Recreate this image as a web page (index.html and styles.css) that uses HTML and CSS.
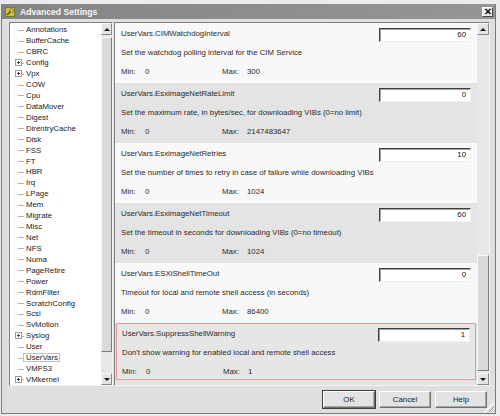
FILE: index.html
```html
<!DOCTYPE html>
<html lang="en">
<head>
    <meta charset="utf-8">
    <title>Advanced Settings</title>
    <link rel="stylesheet" href="styles.css">
</head>
<body>
<div class="window">
    <div class="titlebar">
        <svg class="app" viewBox="0 0 10 10" width="10" height="10">
            <rect x="0.5" y="0.5" width="9" height="9" fill="#c9c33a" stroke="#7c7a22"/>
            <path d="M2 8 L6 4" stroke="#6b4a12" stroke-width="1.6"/>
            <circle cx="6.6" cy="3.4" r="1.6" fill="#f2ee9a" stroke="#6b4a12" stroke-width="0.8"/>
        </svg>
        <span class="title">Advanced Settings</span>
        <span class="close">
            <svg viewBox="0 0 8 7" width="8" height="7">
                <path d="M1.5 1 L6.5 6 M6.5 1 L1.5 6" stroke="#111" stroke-width="1.5"/>
            </svg>
        </span>
    </div>

    <div class="main">
        <div class="tree">
            <ul class="items">
                <li><span class="twig"></span>Annotations</li>
                <li><span class="twig"></span>BufferCache</li>
                <li><span class="twig"></span>CBRC</li>
                <li><span class="twig"><span class="plus"></span></span>Config</li>
                <li><span class="twig"><span class="plus"></span></span>Vpx</li>
                <li><span class="twig"></span>COW</li>
                <li><span class="twig"></span>Cpu</li>
                <li><span class="twig"></span>DataMover</li>
                <li><span class="twig"></span>Digest</li>
                <li><span class="twig"></span>DirentryCache</li>
                <li><span class="twig"></span>Disk</li>
                <li><span class="twig"></span>FSS</li>
                <li><span class="twig"></span>FT</li>
                <li><span class="twig"></span>HBR</li>
                <li><span class="twig"></span>Irq</li>
                <li><span class="twig"></span>LPage</li>
                <li><span class="twig"></span>Mem</li>
                <li><span class="twig"></span>Migrate</li>
                <li><span class="twig"></span>Misc</li>
                <li><span class="twig"></span>Net</li>
                <li><span class="twig"></span>NFS</li>
                <li><span class="twig"></span>Numa</li>
                <li><span class="twig"></span>PageRetire</li>
                <li><span class="twig"></span>Power</li>
                <li><span class="twig"></span>RdmFilter</li>
                <li><span class="twig"></span>ScratchConfig</li>
                <li><span class="twig"></span>Scsi</li>
                <li><span class="twig"></span>SvMotion</li>
                <li><span class="twig"><span class="plus"></span></span>Syslog</li>
                <li><span class="twig"></span>User</li>
                <li><span class="twig"></span><span class="focus">UserVars</span></li>
                <li><span class="twig"></span>VMFS3</li>
                <li><span class="twig"><span class="plus"></span></span>VMkernel</li>
            </ul>
            <div class="sb">
                <span class="sb-btn up"></span>
                <span class="sb-gap top-tree"></span>
                <span class="thumb tree-thumb"></span>
                <span class="sb-gap"></span>
                <span class="sb-btn down"></span>
            </div>
        </div>

        <div class="pane">
            <div class="entries">
                <div class="entry light">
                    <div class="head"><span>UserVars.CIMWatchdogInterval</span><span class="value">60</span></div>
                    <div class="desc">Set the watchdog polling interval for the CIM Service</div>
                    <div class="range"><span class="lbl">Min:</span><span class="minv">0</span><span class="lbl max">Max:</span><span>300</span></div>
                </div>
                <div class="entry dark">
                    <div class="head"><span>UserVars.EsximageNetRateLimit</span><span class="value">0</span></div>
                    <div class="desc">Set the maximum rate, in bytes/sec, for downloading VIBs (0=no limit)</div>
                    <div class="range"><span class="lbl">Min:</span><span class="minv">0</span><span class="lbl max">Max:</span><span>2147483647</span></div>
                </div>
                <div class="entry light">
                    <div class="head"><span>UserVars.EsximageNetRetries</span><span class="value">10</span></div>
                    <div class="desc">Set the number of times to retry in case of failure while downloading VIBs</div>
                    <div class="range"><span class="lbl">Min:</span><span class="minv">0</span><span class="lbl max">Max:</span><span>1024</span></div>
                </div>
                <div class="entry dark">
                    <div class="head"><span>UserVars.EsximageNetTimeout</span><span class="value">60</span></div>
                    <div class="desc">Set the timeout in seconds for downloading VIBs (0=no timeout)</div>
                    <div class="range"><span class="lbl">Min:</span><span class="minv">0</span><span class="lbl max">Max:</span><span>1024</span></div>
                </div>
                <div class="entry light">
                    <div class="head"><span>UserVars.ESXiShellTimeOut</span><span class="value">0</span></div>
                    <div class="desc">Timeout for local and remote shell access (in seconds)</div>
                    <div class="range"><span class="lbl">Min:</span><span class="minv">0</span><span class="lbl max">Max:</span><span>86400</span></div>
                </div>
                <div class="entry dark selected">
                    <div class="head"><span>UserVars.SuppressShellWarning</span><span class="value">1</span></div>
                    <div class="desc">Don't show warning for enabled local and remote shell access</div>
                    <div class="range"><span class="lbl">Min:</span><span class="minv">0</span><span class="lbl max">Max:</span><span>1</span></div>
                </div>
            </div>
            <div class="sb wide">
                <span class="sb-btn up"></span>
                <span class="sb-gap top-pane"></span>
                <span class="thumb pane-thumb"></span>
                <span class="sb-gap"></span>
                <span class="sb-btn down"></span>
            </div>
        </div>
    </div>

    <div class="buttons">
        <span class="btn default">OK</span>
        <span class="btn">Cancel</span>
        <span class="btn">Help</span>
    </div>
</div>
</body>
</html>
```

FILE: styles.css
```css
*{box-sizing:border-box;}
body{
    margin:0;
    background:#ececec;
    font:7.8px "Liberation Sans", Arial, sans-serif;
    color:#222;
}
.window{
    width:495px; height:410px;
    margin:4px 0 0 1px;
    border:1px solid #7a7a7a; border-top:none;
    background:#dfdfdf;
    display:flex; flex-direction:column;
    position:relative;
}
/* resize grip in the corner */
.window::after{
    content:"";
    position:absolute; right:1px; bottom:1px;
    width:10px; height:10px;
    background:repeating-linear-gradient(135deg, transparent 0 2px, #8a8a8a 2px 3px, #fff 3px 4px);
    clip-path:polygon(100% 0, 100% 100%, 0 100%);
}

.titlebar{
    height:15px;
    background:linear-gradient(to right, #858585, #959595);
    display:flex; align-items:center;
    padding:0 2px 0 3px;
}
.titlebar .title{
    flex:1;
    margin-left:5px;
    color:#f6f6f6;
    font-weight:bold; font-size:8.6px;
}
.close{
    width:11px; height:10px;
    background:#e9e9e9;
    border:1px solid; border-color:#fff #444 #444 #fff;
    display:flex; align-items:center; justify-content:center;
}

.main{
    display:flex; gap:1px;
    margin-top:3px;
    padding-left:7px;
    height:364px;
}

/* left tree */
.tree{
    width:104px;
    border:1px solid; border-color:#808080 #f4f4f4 #f4f4f4 #808080;
    background:#fff;
    display:flex;
}
.items{
    flex:1;
    list-style:none;
    margin:0; padding:1.5px 0 0;
    overflow:hidden;
}
.items li{
    height:10.93px;
    display:flex; align-items:center;
    white-space:nowrap;
}
.twig{
    width:16px; height:100%;
    display:flex; align-items:center;
    background:linear-gradient(#b4b4b4,#b4b4b4) no-repeat;
    background-size:6px 1px;
    background-position:8px 55%;
}
.plus{
    width:7px; height:7px;
    margin-left:5px;
    border:1px solid #9a9a9a;
    background:
        linear-gradient(#444,#444) center/3px 1px no-repeat,
        linear-gradient(#444,#444) center/1px 3px no-repeat,
        #fff;
}
.focus{
    margin-left:-3px;
    padding:0 1px 0 2px;
    border:1px solid #b9c3cf;
    line-height:7px;
}

/* scrollbars */
.sb{
    width:11px;
    display:flex; flex-direction:column;
    background:#e8e8e8;
}
.sb.wide{width:12px;}
.sb-btn{
    height:12px;
    background:#e4e4e4;
    border:1px solid; border-color:#fafafa #888 #888 #fafafa;
    display:flex; align-items:center; justify-content:center;
}
.sb-btn.down{height:12px; margin-top:auto;}
.sb-btn.up::before{
    content:"";
    border:3px solid transparent; border-top:0;
    border-bottom:3px solid #111;
}
.sb-btn.down::before{
    content:"";
    border:3px solid transparent; border-bottom:0;
    border-top:3px solid #111;
}
.sb-gap{flex:1;}
.sb-gap.top-tree{flex:0 0 2px;}
.sb-gap.top-pane{flex:0 0 220px;}
.thumb{
    background:#dadada;
    border:1px solid; border-color:#f8f8f8 #7c7c7c #7c7c7c #f8f8f8;
}
.tree-thumb{height:315px;}
.pane-thumb{height:116px;}

/* right pane */
.pane{
    width:376px;
    border:1px solid; border-color:#808080 #f4f4f4 #f4f4f4 #808080;
    background:#e2e2e2;
    display:flex;
}
.entries{
    flex:1;
    overflow:hidden;
    color:#2a2a2a;
}
.entry{
    height:60px;
    padding:1px 6px 0 6px;
}
.entry.light{background:#f8f8f8;}
.entry.dark{background:#e4e4e4;}
.entry.selected{
    height:57px;
    margin:0 1px;
    padding:0 5px;
    border:1px solid #e29c9c;
    background:#e6e6e6;
}
.head{
    height:19px; line-height:19px;
    display:flex; justify-content:space-between; align-items:flex-start;
}
.value{
    width:92px; height:14px;
    margin-top:4px;
    padding-right:4px;
    background:#fff;
    border:1px solid; border-color:#404040 #f0f0f0 #f0f0f0 #404040;
    box-shadow:inset 1px 1px 0 #a0a0a0;
    text-align:right;
    line-height:12px;
    color:#111;
}
.desc{height:19px; line-height:19px; white-space:nowrap;}
.range{height:19px; line-height:19px; display:flex;}
.lbl{width:24px;}
.minv{width:77px;}
.lbl.max{width:25px;}

/* dialog buttons */
.buttons{
    display:flex; justify-content:flex-end; gap:4px;
    margin-top:5px;
    padding-right:8px;
}
.btn{
    width:52px; height:17px;
    background:#e3e3e3;
    border:1px solid; border-color:#fff #6e6e6e #6e6e6e #fff;
    box-shadow:inset -1px -1px 0 #a8a8a8;
    text-align:center; line-height:15px;
    color:#1a1a1a;
}
.btn.default{
    outline:1px solid #3c3c3c;
}
```
